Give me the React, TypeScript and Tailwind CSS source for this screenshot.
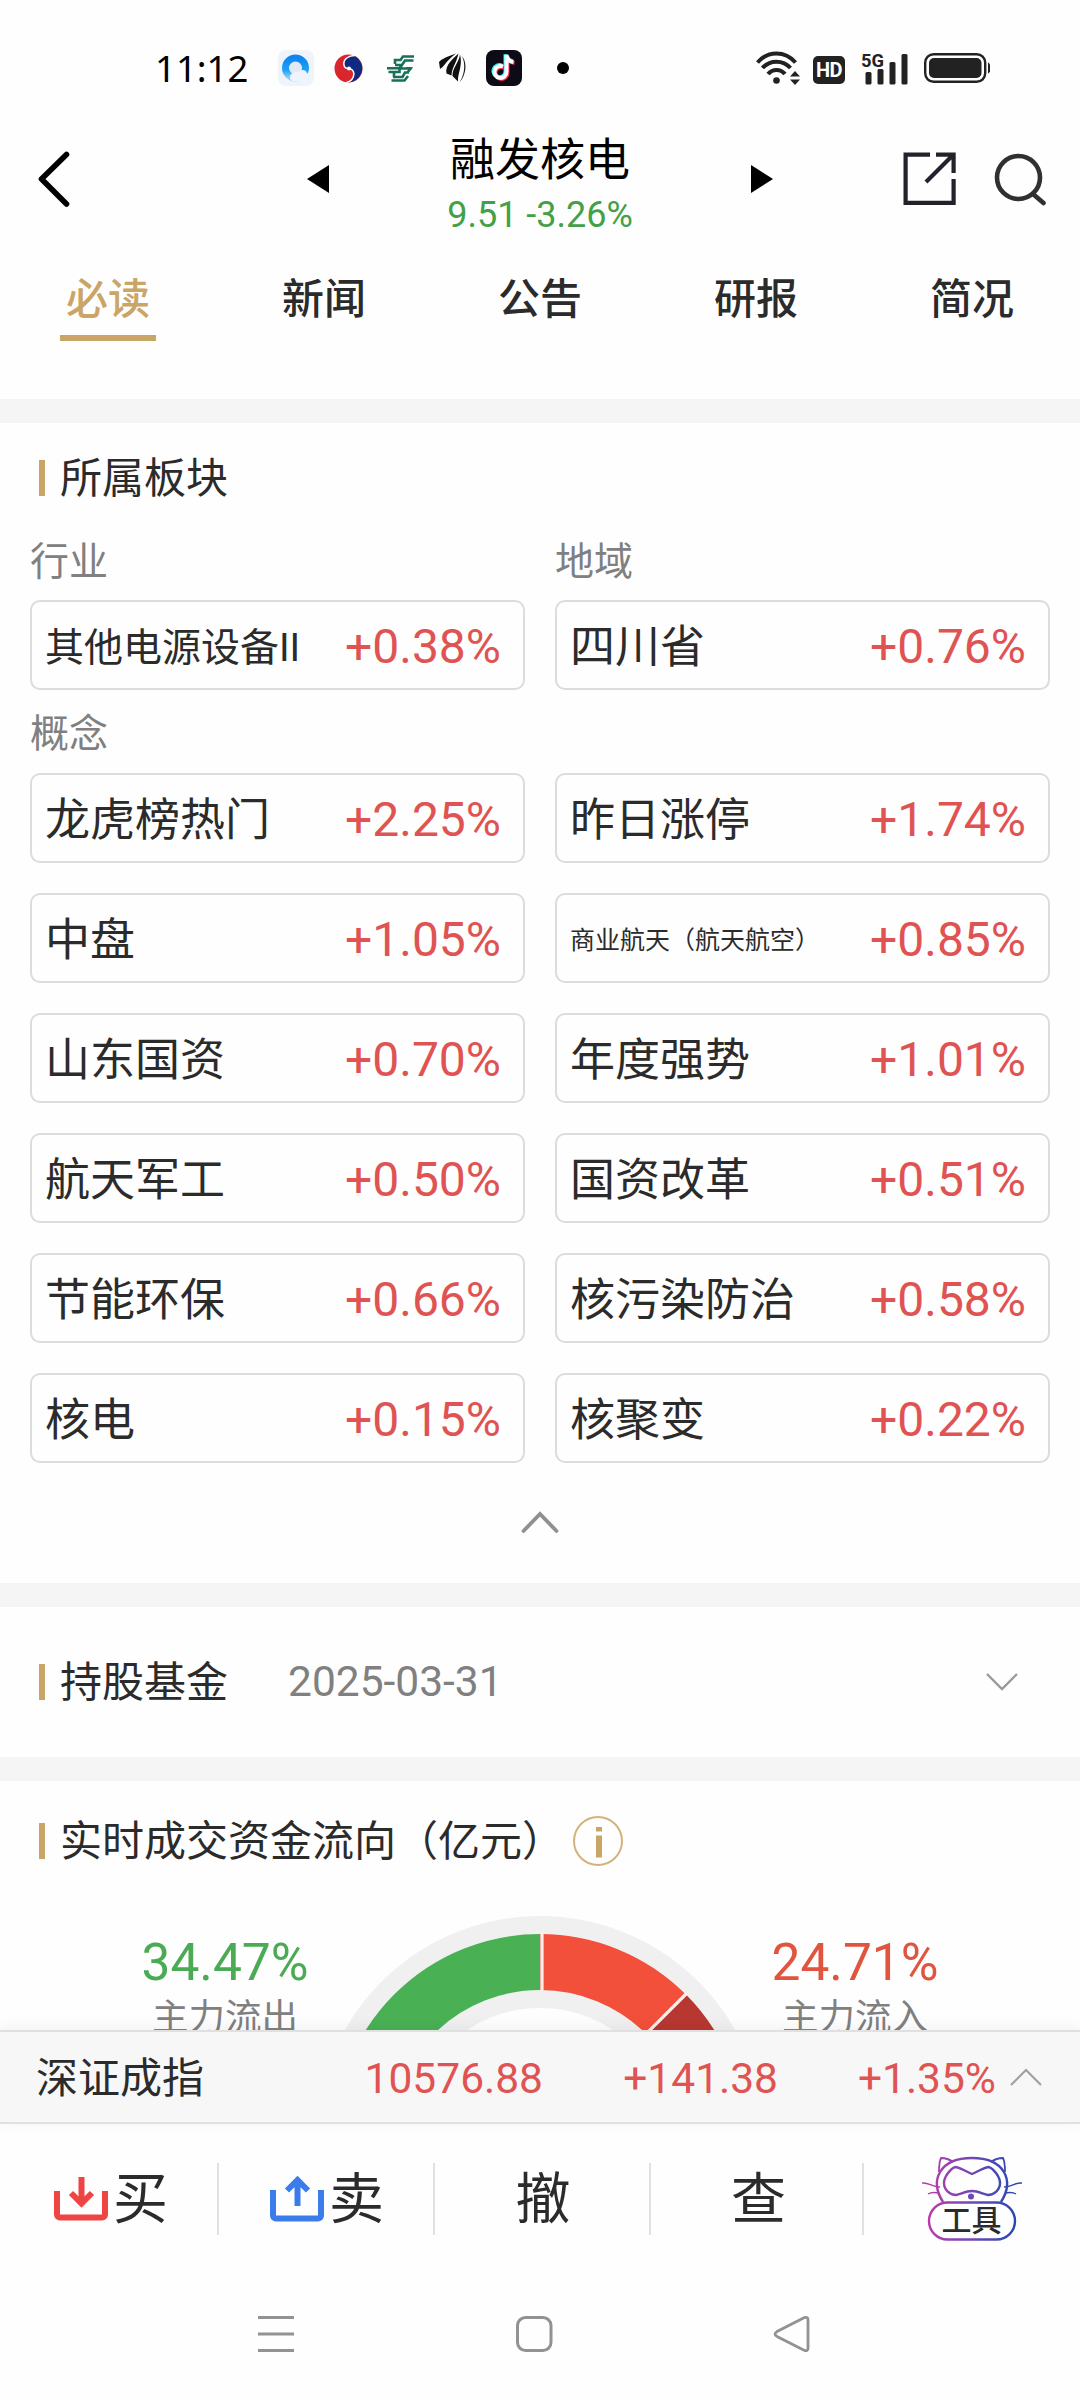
import type { ReactNode } from "react";
import clsx from "clsx";

type Plate = { name: string; change: string; size?: string };

const tabs = ["必读", "新闻", "公告", "研报", "简况"];

const concepts: Plate[] = [
  { name: "龙虎榜热门", change: "+2.25%" },
  { name: "昨日涨停", change: "+1.74%" },
  { name: "中盘", change: "+1.05%" },
  { name: "商业航天（航天航空）", change: "+0.85%", size: "text-[25px]" },
  { name: "山东国资", change: "+0.70%" },
  { name: "年度强势", change: "+1.01%" },
  { name: "航天军工", change: "+0.50%" },
  { name: "国资改革", change: "+0.51%" },
  { name: "节能环保", change: "+0.66%" },
  { name: "核污染防治", change: "+0.58%" },
  { name: "核电", change: "+0.15%" },
  { name: "核聚变", change: "+0.22%" },
];

const StatusBar = () => (
  <div className="flex h-[120px] items-start pt-[48px]">
    <div className="ml-[155px] flex h-10 w-[123px] items-center font-['Noto_Sans'] text-[36.5px] leading-10 text-black">
      11:12
    </div>
    <div className="flex h-10 items-center">
      <svg width="36" height="36" viewBox="0 0 36 36">
        <defs>
          <linearGradient id="qq" x1="0" y1="0" x2="0" y2="1">
            <stop offset="0" stopColor="#0f86ee" />
            <stop offset="0.600" stopColor="#1aa2f6" />
            <stop offset="1" stopColor="#8fd0fa" />
          </linearGradient>
        </defs>
        <rect width="36" height="36" rx="8" fill="#eff4fa" />
        <circle cx="17.500" cy="18" r="10" fill="#e3e9f2" stroke="url(#qq)" strokeWidth="7" />
        <path d="M15 31.500a4.500 4.500 0 0 1 0-8.500c2-1.500 4-1 5 0 2-4 8-4 9 .5 5 0 5 7.500 0 8z" fill="#eef4fb" />
      </svg>
      <svg className="ml-5" width="29" height="29" viewBox="0 0 29 29">
        <circle cx="14.500" cy="14.500" r="14" fill="#d8262c" />
        <path d="M21 2.200A14 14 0 0 1 13 28.400C18 27 20.500 23.500 20 19.500 19.500 16 17 14.500 14.500 14.500 11.500 14.500 9.500 12 10 9 10.500 5 15 1.500 21 2.200z" fill="#0f2a80" />
        <path d="M21 1.500C14 1.500 9.800 5.500 9.800 9.500c0 3 2 5 4.700 5s5.700 2 5.300 6c-.3 4-3.300 7-7.300 8" fill="none" stroke="#fff" strokeWidth="1.500" />
        <circle cx="15" cy="14.500" r="2" fill="#fff" />
      </svg>
      <svg className="ml-6" width="27" height="27" viewBox="0 0 27 27" fill="none" stroke="#17715a" strokeWidth="2.600">
        <path d="M27 1.500H16l-2.500 3.500H8v4M26.500 5.500H18l-3 4.500H8M0 13.300h12l3-3M1.500 17h11v-3.500h11l-3 4M25 13.300h-6M22 17.500h-4l-2.500 4.500H6M21 21l-3.500 4.500H4.500M7 18v4" />
      </svg>
      <svg className="ml-[25px]" width="27" height="30" viewBox="0 0 27 30" fill="#111">
        <path d="M17 .5C10 3 2 6 0 9l1 7c4-2 5-7 16-15.500z" />
        <path d="M19.500.5C15 5 5.500 12 7.500 20.500l5 2C12.500 15 17.500 10 19.500.5z" />
        <path d="M21 1.500c-1 8-8 14-7.500 21.500l5.500 5.500C18.500 20 24 13 21 1.500z" />
        <path d="M22.500 3c3 4 5 15-2 26.500C27.500 22 28.500 8 22.500 3z" />
      </svg>
      <svg className="ml-5" width="36" height="36" viewBox="0 0 36 36">
        <rect width="36" height="36" rx="8" fill="#0c0b16" />
        <g fill="none" strokeWidth="4">
          <path d="M17 16.500a6 6 0 1 0 3.500 5.500V5c.5 4 3 6.500 7 7" stroke="#25f4ee" transform="translate(-1 -.8)" />
          <path d="M17 16.500a6 6 0 1 0 3.500 5.500V5c.5 4 3 6.500 7 7" stroke="#fe2c55" transform="translate(1 1)" />
          <path d="M17 16.500a6 6 0 1 0 3.500 5.500V5c.5 4 3 6.500 7 7" stroke="#fff" />
        </g>
      </svg>
      <div className="ml-[35px] size-3 rounded-full bg-black" />
    </div>
    <div className="ml-auto mr-[89px] flex h-10 items-center">
      <svg width="45" height="34" viewBox="0 0 45 34" fill="none" stroke="#222" strokeWidth="4">
        <path d="M1.500 11.500C12-.5 29-.5 39.500 11.500M6.500 17C14 8.500 27 8.500 34.500 17M12 23c4.500-5.500 12.500-5.500 17 0" />
        <circle cx="20.500" cy="29.500" r="3.300" fill="#222" stroke="none" />
        <path d="M34 25.500l5-5.500 5 5.500zM34 28.500l5 5.500 5-5.500z" fill="#222" stroke="none" />
      </svg>
      <div className="ml-3 mt-1 flex h-7 w-8 items-center justify-center rounded-[5px] bg-[#222] font-[Roboto] text-[20px] font-bold leading-7 tracking-tight text-white">
        HD
      </div>
      <svg className="ml-[16px] overflow-visible" width="48" height="34" viewBox="0 0 48 34" fill="#222">
        <text x="0" y="15.500" fontFamily="Roboto" fontSize="19" fontWeight="700" textLength="23" lengthAdjust="spacingAndGlyphs">5G</text>
        <rect x="4.500" y="21" width="6" height="12.500" rx="1.500" />
        <rect x="16.500" y="18" width="6" height="15.500" rx="1.500" />
        <rect x="28.500" y="11" width="6" height="22.500" rx="1.500" />
        <rect x="40.500" y="3" width="6" height="30.500" rx="1.500" />
      </svg>
      <svg className="ml-[15px]" width="67" height="30" viewBox="0 0 67 30">
        <rect x="1.200" y="1.200" width="60" height="27.600" rx="8.500" fill="none" stroke="#222" strokeWidth="2.400" />
        <rect x="5" y="5" width="52.500" height="20" rx="5" fill="#222" />
        <path d="M64 9.500v11a5 5 0 0 0 2-2v-7a5 5 0 0 0-2-2z" fill="#222" />
      </svg>
    </div>
  </div>
);

const Header = () => (
  <div className="flex h-[138px] items-start">
    <svg className="ml-[36px] mt-[30px]" width="36" height="58" viewBox="0 0 36 58" fill="none" stroke="#000" strokeWidth="5.600" strokeLinecap="round" strokeLinejoin="round">
      <path d="M30.500 4.500L5.500 29l25 25" />
    </svg>
    <svg className="ml-[234px] mt-[44px]" width="24" height="30" viewBox="0 0 24 30">
      <path d="M23 1v28L1 15z" />
    </svg>
    <div className="ml-[57px] flex w-[306px] flex-col items-center">
      <h1 className="mt-[14px] text-[45px] leading-[54px] text-black">融发核电</h1>
      <div className="mt-[6px] text-[36px] leading-[42px] text-[#43a047]">9.51 -3.26%</div>
    </div>
    <svg className="ml-[57px] mt-[44px]" width="24" height="30" viewBox="0 0 24 30">
      <path d="M1 1v28l22-14z" />
    </svg>
    <svg className="ml-[129px] mt-[32px]" width="54" height="54" viewBox="0 0 54 54" fill="none" stroke="#23222c" strokeWidth="4.200">
      <path d="M27 2.600H2.600v48.300h48V27M33 2.600h17.600V21M50 3L23 30" />
    </svg>
    <svg className="ml-[36px] mt-[33px]" width="54" height="53" viewBox="0 0 54 53" fill="none" stroke="#303030" strokeWidth="4.600">
      <circle cx="25.500" cy="24.500" r="21.500" />
      <path d="M40 41l10.500 9" strokeLinecap="round" />
    </svg>
  </div>
);

const Tabs = () => (
  <div className="grid h-[141px] grid-cols-5 text-[42px] font-medium leading-[60px] text-[#2b2b2b]">
    {tabs.map((tab, i) => (
      <div key={tab} className="flex flex-col items-center pt-[12px]">
        <span className={clsx(i === 0 && "text-[#c9a566]")}>{tab}</span>
        {i === 0 && <div className="mt-[5px] h-1.5 w-24 bg-[#c9a566]" />}
      </div>
    ))}
  </div>
);

const Divider = () => <div className="h-6 shrink-0 bg-[#f5f5f5]" />;

const SectionTitle = ({ children }: { children: ReactNode }) => (
  <div className="flex items-center">
    <div className="ml-[39px] h-9 w-1.5 bg-[#c9a566]" />
    <h2 className="ml-[15px] pt-0.5 text-[42px] leading-[58px] text-[#2b2b2b]">{children}</h2>
  </div>
);

const PlateCard = ({ name, change, size = "text-[45px]" }: Plate) => (
  <div className="flex h-[90px] items-center justify-between rounded-[10px] border-2 border-[#dcdcdc] pl-[13px] pr-[22px]">
    <span className={clsx("whitespace-nowrap pt-[5px] leading-[60px] text-[#2b2b2b]", size)}>{name}</span>
    <span className="pt-[3px] text-[48px] leading-[60px] text-[#e05353]">{change}</span>
  </div>
);

const Plates = () => (
  <section className="h-[1160px] shrink-0 pt-[25px]">
    <SectionTitle>所属板块</SectionTitle>
    <div className="px-[30px]">
      <div className="mt-[24px] grid grid-cols-2 gap-x-[30px] text-[39px] leading-[60px] text-[#808080]">
        <span>行业</span>
        <span>地域</span>
      </div>
      <div className="mt-[8px] grid grid-cols-2 gap-x-[30px]">
        <PlateCard name="其他电源设备II" change="+0.38%" size="text-[39px]" />
        <PlateCard name="四川省" change="+0.76%" />
      </div>
      <div className="mt-[14px] text-[39px] leading-[60px] text-[#808080]">概念</div>
      <div className="mt-[9px] grid grid-cols-2 gap-[30px]">
        {concepts.map((item) => (
          <PlateCard key={item.name} {...item} />
        ))}
      </div>
    </div>
    <svg className="mx-auto mt-[47px]" width="40" height="25" viewBox="0 0 40 25" fill="none" stroke="#909090" strokeWidth="3.800" strokeLinecap="round">
      <path d="M3.500 21L20 4l16.500 17" />
    </svg>
  </section>
);

const Funds = () => (
  <section className="flex h-[150px] shrink-0 items-center">
    <SectionTitle>持股基金</SectionTitle>
    <span className="ml-[60px] text-[42.500px] leading-[60px] text-[#808080]">2025-03-31</span>
    <svg className="ml-auto mr-[61px]" width="34" height="20" viewBox="0 0 34 20" fill="none" stroke="#999" strokeWidth="2.400">
      <path d="M2 2l15 15L32 2" />
    </svg>
  </section>
);

const FlowLabel = ({ value, label, color }: { value: string; label: string; color: string }) => (
  <div className="flex w-[172px] flex-col items-center whitespace-nowrap pt-[62px]">
    <span className={clsx("text-[51.500px] leading-[60px]", color)}>{value}</span>
    <span className="text-[36.500px] leading-[50px] text-[#808080]">{label}</span>
  </div>
);

const MoneyFlow = () => (
  <section className="h-[249px] shrink-0 overflow-hidden pt-[30px]">
    <div className="flex items-center">
      <SectionTitle>实时成交资金流向（亿元）</SectionTitle>
      <svg className="ml-[9px]" width="50" height="50" viewBox="0 0 50 50" fill="#c9a566">
        <circle cx="25" cy="25" r="24" fill="none" stroke="#d3b37c" strokeWidth="2" />
        <rect x="23" y="11" width="6" height="4.500" />
        <rect x="23" y="19.500" width="6" height="22" />
      </svg>
    </div>
    <div className="flex">
      <div className="w-[139px]" />
      <FlowLabel value="34.47%" label="主力流出" color="text-[#4bab55]" />
      <svg className="ml-[4px] mt-[44px]" width="450" height="225" viewBox="0 0 450 225" fill="none">
        <circle cx="225" cy="225" r="178" stroke="#f0f0f0" strokeWidth="92" />
        <path d="M225 47A178 178 0 0 0 47 225" stroke="#49b154" strokeWidth="56" />
        <path d="M225 47A178 178 0 0 1 350.900 99.100" stroke="#f2503b" strokeWidth="56" />
        <path d="M350.900 99.100A178 178 0 0 1 403 225" stroke="#b83731" strokeWidth="56" />
        <path d="M227 18v58M330 120l42-42" stroke="#fbeeec" strokeWidth="3.200" />
      </svg>
      <div className="w-[4px]" />
      <FlowLabel value="24.71%" label="主力流入" color="text-[#e0553f]" />
    </div>
  </section>
);

const IndexBar = () => (
  <div className="relative flex h-[94px] shrink-0 items-center border-y-2 border-[#e0e0e0] bg-[#f7f7f7] pt-1 text-[42.500px] leading-[60px] text-[#e05353] shadow-[0_-2px_16px_rgba(0,0,0,0.06)]">
    <span className="ml-[36px] text-[42px] text-[#2b2b2b]">深证成指</span>
    <span className="ml-auto w-[200px] text-right">10576.88</span>
    <span className="w-[235px] text-right">+141.38</span>
    <span className="w-[218px] text-right">+1.35%</span>
    <svg className="mb-1 ml-[14px] mr-[38px]" width="32" height="18" viewBox="0 0 32 18" fill="none" stroke="#a0a0a0" strokeWidth="2.200">
      <path d="M1 17L16 2l15 15" />
    </svg>
  </div>
);

const TradeBar = () => (
  <div className="flex h-[150px] shrink-0 items-center text-[55px] leading-[72px] text-[#2b2b2b]">
    <div className="flex h-[72px] w-[219px] items-center border-r-2 border-[#e0e0e0] pl-[54px]">
      <svg width="54" height="48" viewBox="0 0 54 48" fill="none" stroke="#ee4444" strokeWidth="6">
        <path d="M3 16v23.500a3 3 0 0 0 3 3h42a3 3 0 0 0 3-3V16M27.500 2v26M17 18l10.500 10.500L38 18" />
      </svg>
      <span className="ml-[5px]">买</span>
    </div>
    <div className="flex h-[72px] w-[216px] items-center border-r-2 border-[#e0e0e0] pl-[51px]">
      <svg width="54" height="48" viewBox="0 0 54 48" fill="none" stroke="#3b7cec" strokeWidth="6">
        <path d="M3 15v25.500a3 3 0 0 0 3 3h42a3 3 0 0 0 3-3V15M27.500 31V6M17 15.500L27.500 5 38 15.500" />
      </svg>
      <span className="ml-[5px]">卖</span>
    </div>
    <div className="flex h-[72px] w-[216px] items-center justify-center border-r-2 border-[#e0e0e0] pl-0.5">撤</div>
    <div className="flex h-[72px] w-[213px] items-center justify-center border-r-2 border-[#e0e0e0] pl-1">查</div>
    <div className="flex flex-1 justify-center">
      <svg width="104" height="88" viewBox="0 0 104 88" fill="none" stroke="url(#cat)" strokeWidth="2.400">
        <defs>
          <linearGradient id="cat" gradientUnits="userSpaceOnUse" x1="10" y1="0" x2="94" y2="0">
            <stop offset="0" stopColor="#b83aac" />
            <stop offset="0.500" stopColor="#7048b4" />
            <stop offset="1" stopColor="#2a48b4" />
          </linearGradient>
        </defs>
        <path d="M23 47C9 25 20 3 52 3s43 22 29 44" />
        <path d="M19 17c0-7 1-12 2-14 4 0 8 1 12 4M85 17c0-7-1-12-2-14-4 0-8 1-12 4" strokeWidth="1.800" />
        <path d="M35 12c4 0 12 5 17 7 5-2 13-7 17-7 5 2 11 10 11 16 0 7-6 12-12 12-5-1-10-4-16-4s-11 3-16 4c-6 0-12-5-12-12 0-6 6-14 11-16z" />
        <circle cx="51" cy="41.500" r="3" fill="#7048b4" stroke="none" />
        <path d="M2 28c7-1 9 4 18 4M8 39c3-2 6-2 11-1M102 28c-7-1-9 4-18 4M96 39c-3-2-6-2-11-1" strokeWidth="1.500" />
        <rect x="9" y="47.500" width="86" height="37" rx="18.500" fill="#fff" />
        <text x="51.500" y="75.500" textAnchor="middle" fontSize="30" fontWeight="500" fill="#2b2b2b" stroke="none">
          工具
        </text>
      </svg>
    </div>
  </div>
);

const SystemNav = () => (
  <div className="flex flex-1 items-start pt-[40px]">
    <svg className="ml-[258px]" width="36" height="40" viewBox="0 0 36 40" stroke="#929292" strokeWidth="3">
      <path d="M0 3.500h36M0 20h36M0 36.500h36" />
    </svg>
    <svg className="ml-[221px]" width="38" height="40" viewBox="0 0 38 40" fill="none" stroke="#929292" strokeWidth="3">
      <rect x="2.500" y="3.500" width="33.500" height="33" rx="8" />
    </svg>
    <svg className="ml-[220px]" width="38" height="40" viewBox="0 0 38 40" fill="none" stroke="#929292" strokeWidth="2.800">
      <path d="M31.500 3.600L4 17.600q-4 2.400 0 4.800L31.500 36.400q3.500 1 3.500-2.400V6q0-3.400-3.500-2.400z" />
    </svg>
  </div>
);

export default function App() {
  return (
    <div className="flex h-[2400px] w-[1080px] flex-col overflow-hidden bg-[#fefefe] font-[Roboto,'Noto_Sans_CJK_SC',sans-serif]">
      <StatusBar />
      <Header />
      <Tabs />
      <Divider />
      <Plates />
      <Divider />
      <Funds />
      <Divider />
      <MoneyFlow />
      <IndexBar />
      <TradeBar />
      <SystemNav />
    </div>
  );
}
